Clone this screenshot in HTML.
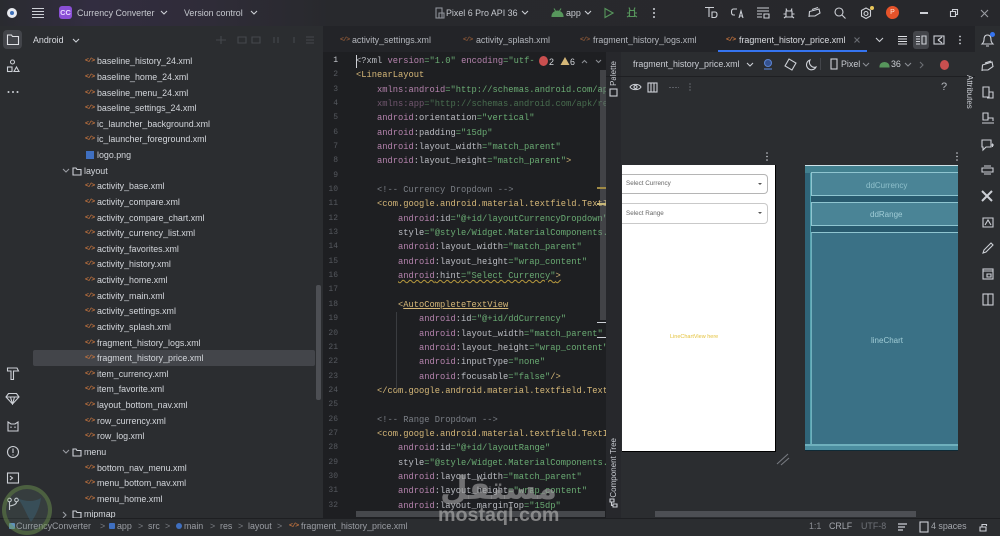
<!DOCTYPE html>
<html><head><meta charset="utf-8"><style>
html,body{margin:0;padding:0;background:#2b2d30}
#r{position:relative;width:1000px;height:536px;overflow:hidden;background:#2b2d30;font-family:"Liberation Sans",sans-serif;color:#c9ccd2;font-size:8.9px;filter:blur(.3px)}
#r div,#r span.a,#r svg{position:absolute}
.t{position:absolute;white-space:nowrap;line-height:12px}
svg{fill:none;stroke:#cdd0d6;stroke-width:1.1}
.f{position:absolute;left:97px;white-space:nowrap;line-height:12px;color:#d3d6db;font-size:8.9px}
.fo{position:absolute;left:84px;white-space:nowrap;line-height:12px;color:#d3d6db;font-size:8.9px}
.x{position:absolute;left:85px;font:bold 6.5px/12px "Liberation Mono",monospace;color:#c9763f;letter-spacing:-.8px}
.c{position:absolute;white-space:pre;font:8.75px/14px "Liberation Mono",monospace;color:#bcbec4}
.n{position:absolute;left:324px;width:14px;text-align:right;font:8px/14px "Liberation Mono",monospace;color:#55585e}
.g{color:#6aab73}.p{color:#b583ad}.m{color:#7a7e85}.k{color:#d5b778}.d{color:#606368}.ln{color:#c9ccd2}
</style></head><body><div id="r">

<!-- title bar -->
<div style="left:0;top:0;width:1000px;height:26px;background:linear-gradient(90deg,#2a2b30 0,#322d40 90px,#2f2c38 210px,#28292d 330px,#27282c 100%)"></div>
<div style="left:7px;top:8px;width:10px;height:10px;border-radius:50%;background:#e8eaf0"></div>
<div style="left:10px;top:11px;width:4px;height:4px;background:#3d6fb8;border-radius:50%"></div>
<svg style="left:31px;top:7px" width="14" height="12"><path d="M1 1.500H13M1 4.500H13M1 7.500H13M1 10.500H13"/></svg>
<div style="left:59px;top:6px;width:13px;height:13px;border-radius:3px;background:#8a4fd6;color:#e8d8ff;font:bold 7.5px/13px 'Liberation Sans',sans-serif;text-align:center">CC</div>
<span class="t" style="left:77px;top:7px;color:#c6c9cf">Currency Converter</span>
<svg style="left:160px;top:10px" width="8" height="6"><path d="M1 1L4 4L7 1"/></svg>
<span class="t" style="left:184px;top:7px;color:#c6c9cf">Version control</span>
<svg style="left:250px;top:10px" width="8" height="6"><path d="M1 1L4 4L7 1"/></svg>

<svg style="left:434px;top:7px" width="11" height="12" stroke-width="1"><rect x="2" y="1" width="6" height="10" stroke="#8f939a"/><path d="M5 6h5v5H5z" stroke="#8f939a"/></svg>
<span class="t" style="left:446px;top:7px;color:#c6c9cf">Pixel 6 Pro API 36</span>
<svg style="left:521px;top:10px" width="8" height="6"><path d="M1 1L4 4L7 1"/></svg>
<svg style="left:551px;top:7px" width="13" height="11"><path d="M1 9.500C1 6 4 4 6.500 4S12 6 12 9.500Z" fill="#57965c" stroke="#57965c"/><path d="M3 1.500L4.500 4M10 1.500L8.500 4" stroke="#57965c"/></svg>
<span class="t" style="left:566px;top:7px;color:#c6c9cf">app</span>
<svg style="left:584px;top:10px" width="8" height="6"><path d="M1 1L4 4L7 1"/></svg>
<svg style="left:603px;top:7px" width="11" height="12"><path d="M2 1.500L10 6L2 10.500Z" stroke="#57965c"/></svg>
<svg style="left:626px;top:6px" width="12" height="13"><path d="M3.500 4.500H8.500V10.500H3.500ZM1 7H3.500M8.500 7H11M4 4L3 1.500M8 4L9 1.500M1 11L3.500 9.500M11 11L8.500 9.500" stroke="#57965c"/></svg>
<svg style="left:651px;top:7px" width="6" height="12"><circle cx="3" cy="2" r="1" fill="#cdd0d6" stroke="none"/><circle cx="3" cy="6" r="1" fill="#cdd0d6" stroke="none"/><circle cx="3" cy="10" r="1" fill="#cdd0d6" stroke="none"/></svg>

<svg style="left:704px;top:6px" width="14" height="14"><path d="M1 1.500H10M5 1.500V11M8 6H11Q13 6 13 8.500T11 11.500H8Z"/></svg>
<svg style="left:730px;top:6px" width="14" height="14"><path d="M7 3H3.500Q1.500 3 1.500 6T3.500 9H5M9 12L11 5L13 12M9.800 10H12.200"/></svg>
<svg style="left:756px;top:6px" width="14" height="14"><path d="M1 2H13M1 5H13M1 8H6M1 11H6M8 8H13V12H8Z"/></svg>
<svg style="left:782px;top:6px" width="14" height="14"><path d="M4 5H10V11H4ZM1.500 8H4M10 8H12.500M5 5L4 2.500M9 5L10 2.500M2 12L4 10.500M12 12L10 10.500"/></svg>
<svg style="left:807px;top:6px" width="15" height="14"><path d="M2 11L2.500 5.500L12 3L13 7L8 10H2M5 3.500L11 1.500"/></svg>
<svg style="left:833px;top:6px" width="14" height="14"><circle cx="6" cy="6" r="4"/><path d="M9 9L12.500 12.500"/></svg>
<svg style="left:859px;top:6px" width="14" height="14"><circle cx="7" cy="7.500" r="2"/><path d="M7 2L11.500 4.500V10L7 12.500L2.500 10V4.500Z"/></svg>
<div style="left:870px;top:6px;width:4px;height:4px;border-radius:50%;background:#e8c65a"></div>
<div style="left:886px;top:6px;width:13px;height:13px;border-radius:50%;background:#e5532a;color:#ffe3d6;font:7px/13px 'Liberation Sans',sans-serif;text-align:center">P</div>
<div style="left:920px;top:12px;width:8px;height:1.500px;background:#cdd0d6"></div>
<svg style="left:949px;top:8px" width="10" height="10"><path d="M1.500 3.500H6.500V8.500H1.500ZM3.500 3.500V1.500H8.500V6.500H6.500"/></svg>
<svg style="left:980px;top:9px" width="9" height="9"><path d="M1 1L8 8M8 1L1 8" stroke="#9a9da3"/></svg>

<!-- left stripe icons -->
<div style="left:3px;top:30px;width:19px;height:19px;border-radius:4px;background:#43454a"></div>
<svg style="left:6px;top:33px" width="14" height="13"><path d="M1.500 2H5.500L6.500 3.500H12.500V11.500H1.500Z" stroke="#e0e2e6"/></svg>
<svg style="left:6px;top:59px" width="14" height="14"><circle cx="6.500" cy="3" r="2"/><rect x="1.500" y="8" width="4.500" height="4.500"/><path d="M10.500 8L13 12.500H8Z"/></svg>
<svg style="left:6px;top:88px" width="14" height="8"><circle cx="2.500" cy="4" r="1" fill="#cdd0d6" stroke="none"/><circle cx="7" cy="4" r="1" fill="#cdd0d6" stroke="none"/><circle cx="11.500" cy="4" r="1" fill="#cdd0d6" stroke="none"/></svg>
<svg style="left:6px;top:366px" width="14" height="15"><path d="M1.500 2H11L12.500 5H7.500V13.500H5V5H1.500Z"/></svg>
<svg style="left:5px;top:392px" width="15" height="13"><path d="M3.500 1.500H11.500L14 5L7.500 12L1 5ZM1 5H14M5.500 5L7.500 12L9.500 5"/></svg>
<svg style="left:6px;top:419px" width="14" height="14"><path d="M2 3L5 5H9L12 3V12H2ZM5 7.500V9M9 7.500V9"/></svg>
<svg style="left:6px;top:445px" width="14" height="14"><circle cx="7" cy="7" r="5.500"/><path d="M7 3.500V8M7 9.500V10.500"/></svg>
<svg style="left:6px;top:471px" width="14" height="14"><rect x="1.500" y="2" width="11" height="10"/><path d="M4 5L6.500 7L4 9"/></svg>
<svg style="left:6px;top:497px" width="14" height="14"><circle cx="3.500" cy="3" r="1.800"/><circle cx="10.500" cy="3" r="1.800"/><path d="M3.500 5V13M10.500 5Q10.500 8 3.500 9"/></svg>

<!-- project header -->
<span class="t" style="left:33px;top:34px;color:#d9dbe0">Android</span>
<svg style="left:72px;top:38px" width="8" height="6"><path d="M1 1L4 4L7 1"/></svg>
<svg style="left:214px;top:34px" width="100" height="12"><g stroke="#45484d"><path d="M2 6H12M7 2V10M24 3H32V9H24ZM38 3H46V9H38ZM60 3V9M64 3V9M80 3V9M92 3H102M92 6H102M92 9H102"/></g></svg>

<!-- tree -->
<div style="left:33px;top:350px;width:282px;height:16px;background:#43454a;border-radius:2px"></div>
<div style="left:316px;top:285px;width:5px;height:115px;background:#4d4f54;border-radius:2px"></div>

<span class="x" style="top:55px">&lt;/&gt;</span><span class="f" style="top:55px">baseline_history_24.xml</span>
<span class="x" style="top:71px">&lt;/&gt;</span><span class="f" style="top:71px">baseline_home_24.xml</span>
<span class="x" style="top:87px">&lt;/&gt;</span><span class="f" style="top:87px">baseline_menu_24.xml</span>
<span class="x" style="top:102px">&lt;/&gt;</span><span class="f" style="top:102px">baseline_settings_24.xml</span>
<span class="x" style="top:118px">&lt;/&gt;</span><span class="f" style="top:118px">ic_launcher_background.xml</span>
<span class="x" style="top:133px">&lt;/&gt;</span><span class="f" style="top:133px">ic_launcher_foreground.xml</span>
<div style="left:86px;top:151px;width:8px;height:8px;background:#3f6fc0"></div><span class="f" style="top:149px">logo.png</span>
<svg style="left:62px;top:168px" width="8" height="6"><path d="M1 1L4 4L7 1" stroke="#9a9da3"/></svg>
<svg style="left:72px;top:166px" width="10" height="10"><path d="M1 2H4L5 3.500H9V9H1Z"/></svg>
<span class="fo" style="top:165px">layout</span>
<span class="x" style="top:180px">&lt;/&gt;</span><span class="f" style="top:180px">activity_base.xml</span>
<span class="x" style="top:196px">&lt;/&gt;</span><span class="f" style="top:196px">activity_compare.xml</span>
<span class="x" style="top:212px">&lt;/&gt;</span><span class="f" style="top:212px">activity_compare_chart.xml</span>
<span class="x" style="top:227px">&lt;/&gt;</span><span class="f" style="top:227px">activity_currency_list.xml</span>
<span class="x" style="top:243px">&lt;/&gt;</span><span class="f" style="top:243px">activity_favorites.xml</span>
<span class="x" style="top:258px">&lt;/&gt;</span><span class="f" style="top:258px">activity_history.xml</span>
<span class="x" style="top:274px">&lt;/&gt;</span><span class="f" style="top:274px">activity_home.xml</span>
<span class="x" style="top:290px">&lt;/&gt;</span><span class="f" style="top:290px">activity_main.xml</span>
<span class="x" style="top:305px">&lt;/&gt;</span><span class="f" style="top:305px">activity_settings.xml</span>
<span class="x" style="top:321px">&lt;/&gt;</span><span class="f" style="top:321px">activity_splash.xml</span>
<span class="x" style="top:337px">&lt;/&gt;</span><span class="f" style="top:337px">fragment_history_logs.xml</span>
<span class="x" style="top:352px">&lt;/&gt;</span><span class="f" style="top:352px">fragment_history_price.xml</span>
<span class="x" style="top:368px">&lt;/&gt;</span><span class="f" style="top:368px">item_currency.xml</span>
<span class="x" style="top:383px">&lt;/&gt;</span><span class="f" style="top:383px">item_favorite.xml</span>
<span class="x" style="top:399px">&lt;/&gt;</span><span class="f" style="top:399px">layout_bottom_nav.xml</span>
<span class="x" style="top:415px">&lt;/&gt;</span><span class="f" style="top:415px">row_currency.xml</span>
<span class="x" style="top:430px">&lt;/&gt;</span><span class="f" style="top:430px">row_log.xml</span>
<svg style="left:62px;top:449px" width="8" height="6"><path d="M1 1L4 4L7 1" stroke="#9a9da3"/></svg>
<svg style="left:72px;top:447px" width="10" height="10"><path d="M1 2H4L5 3.500H9V9H1Z"/></svg>
<span class="fo" style="top:446px">menu</span>
<span class="x" style="top:462px">&lt;/&gt;</span><span class="f" style="top:462px">bottom_nav_menu.xml</span>
<span class="x" style="top:477px">&lt;/&gt;</span><span class="f" style="top:477px">menu_bottom_nav.xml</span>
<span class="x" style="top:493px">&lt;/&gt;</span><span class="f" style="top:493px">menu_home.xml</span>
<svg style="left:62px;top:511px" width="6" height="8"><path d="M1 1L4 4L1 7" stroke="#9a9da3"/></svg>
<svg style="left:72px;top:509px" width="10" height="10"><path d="M1 2H4L5 3.500H9V9H1Z"/></svg>
<span class="fo" style="top:508px">mipmap</span>

<!-- editor -->
<div style="left:323px;top:26px;width:652px;height:26px;background:#232428"></div>
<div style="left:323px;top:52px;width:283px;height:466px;background:#1e1f22"></div>

<span class="x" style="left:340px;top:34px;opacity:.65">&lt;/&gt;</span><span class="t" style="left:352px;top:34px;color:#b4b7bd">activity_settings.xml</span>
<span class="x" style="left:463px;top:34px;opacity:.65">&lt;/&gt;</span><span class="t" style="left:476px;top:34px;color:#b4b7bd">activity_splash.xml</span>
<span class="x" style="left:580px;top:34px;opacity:.65">&lt;/&gt;</span><span class="t" style="left:593px;top:34px;color:#b4b7bd">fragment_history_logs.xml</span>
<span class="x" style="left:726px;top:34px">&lt;/&gt;</span><span class="t" style="left:739px;top:34px;color:#d9dbe0">fragment_history_price.xml</span>
<svg style="left:853px;top:36px" width="8" height="8"><path d="M1.500 1.500L6.500 6.500M6.500 1.500L1.500 6.500" stroke="#6b6e74"/></svg>
<div style="left:718px;top:50px;width:149px;height:3px;background:#3574f0"></div>
<svg style="left:875px;top:37px" width="9" height="6"><path d="M1 1L4.500 4.500L8 1"/></svg>
<svg style="left:897px;top:35px" width="11" height="10"><path d="M1 1.500H10M1 4H10M1 6.500H10M1 9H10" stroke="#e0e2e6"/></svg>
<div style="left:913px;top:31px;width:16px;height:18px;background:#43454a;border-radius:3px"></div>
<svg style="left:915px;top:35px" width="12" height="10"><path d="M1 1.500H5M1 4H5M1 6.500H5M1 9H5M7 1H11V9H7Z"/></svg>
<svg style="left:933px;top:35px" width="12" height="10"><rect x="1" y="1" width="10" height="8"/><path d="M5 5L9 2M5 5L9 8"/></svg>
<svg style="left:957px;top:35px" width="6" height="10"><circle cx="3" cy="1.500" r=".9" fill="#cdd0d6" stroke="none"/><circle cx="3" cy="5" r=".9" fill="#cdd0d6" stroke="none"/><circle cx="3" cy="8.500" r=".9" fill="#cdd0d6" stroke="none"/></svg>

<div style="left:323px;top:53px;width:283px;height:461px;overflow:hidden;background:transparent">
<span class="c" style="left:33px;top:1px;color:#bcbec4">&lt;?xml <span class="p">version</span><span class="g">="1.0"</span> <span class="p">encoding</span><span class="g">="utf-</span></span>
<span class="c" style="left:33px;top:15px;color:#d5b778">&lt;LinearLayout</span>
<span class="c" style="left:54px;top:30px"><span class="p">xmlns:android</span><span class="g">="http://schemas.android.com/ap</span></span>
<span class="c" style="left:54px;top:44px;opacity:.55"><span class="p">xmlns:app</span><span class="g">="http://schemas.android.com/apk/re</span></span>
<span class="c" style="left:54px;top:58px"><span class="p">android</span>:orientation<span class="g">="vertical"</span></span>
<span class="c" style="left:54px;top:73px"><span class="p">android</span>:padding<span class="g">="15dp"</span></span>
<span class="c" style="left:54px;top:87px"><span class="p">android</span>:layout_width<span class="g">="match_parent"</span></span>
<span class="c" style="left:54px;top:101px"><span class="p">android</span>:layout_height<span class="g">="match_parent"</span><span class="k">&gt;</span></span>
<span class="c m" style="left:54px;top:130px">&lt;!-- Currency Dropdown --&gt;</span>
<span class="c k" style="left:54px;top:144px">&lt;com.google.android.material.textfield.TextI</span>
<span class="c" style="left:75px;top:159px"><span class="p">android</span>:id<span class="g">="@+id/layoutCurrencyDropdown"</span></span>
<span class="c" style="left:75px;top:173px">style<span class="g">="@style/Widget.MaterialComponents.</span></span>
<span class="c" style="left:75px;top:187px"><span class="p">android</span>:layout_width<span class="g">="match_parent"</span></span>
<span class="c" style="left:75px;top:202px"><span class="p">android</span>:layout_height<span class="g">="wrap_content"</span></span>
<span class="c" style="left:75px;top:216px;text-decoration:underline wavy #b89a3e 1px"><span class="p">android</span>:hint<span class="g">="Select Currency"</span><span class="k">&gt;</span></span>
<span class="c k" style="left:75px;top:245px">&lt;<u>AutoCompleteTextView</u></span>
<span class="c" style="left:96px;top:259px"><span class="p">android</span>:id<span class="g">="@+id/ddCurrency"</span></span>
<span class="c" style="left:96px;top:274px"><span class="p">android</span>:layout_width<span class="g">="match_parent"</span></span>
<span class="c" style="left:96px;top:288px"><span class="p">android</span>:layout_height<span class="g">="wrap_content"</span></span>
<span class="c" style="left:96px;top:302px"><span class="p">android</span>:inputType<span class="g">="none"</span></span>
<span class="c" style="left:96px;top:317px"><span class="p">android</span>:focusable<span class="g">="false"</span><span class="k">/&gt;</span></span>
<span class="c k" style="left:54px;top:331px">&lt;/com.google.android.material.textfield.Text</span>
<span class="c m" style="left:54px;top:360px">&lt;!-- Range Dropdown --&gt;</span>
<span class="c k" style="left:54px;top:374px">&lt;com.google.android.material.textfield.TextI</span>
<span class="c" style="left:75px;top:388px"><span class="p">android</span>:id<span class="g">="@+id/layoutRange"</span></span>
<span class="c" style="left:75px;top:403px">style<span class="g">="@style/Widget.MaterialComponents.</span></span>
<span class="c" style="left:75px;top:417px"><span class="p">android</span>:layout_width<span class="g">="match_parent"</span></span>
<span class="c" style="left:75px;top:431px"><span class="p">android</span>:layout_height<span class="g">="wrap_content"</span></span>
<span class="c" style="left:75px;top:446px"><span class="p">android</span>:layout_marginTop<span class="g">="15dp"</span></span>
</div>

<span class="n ln" style="top:54px">1</span><span class="n" style="top:68px">2</span><span class="n" style="top:83px">3</span><span class="n" style="top:97px">4</span><span class="n" style="top:111px">5</span><span class="n" style="top:126px">6</span><span class="n" style="top:140px">7</span><span class="n" style="top:154px">8</span><span class="n" style="top:169px">9</span><span class="n" style="top:183px">10</span><span class="n" style="top:197px">11</span><span class="n" style="top:212px">12</span><span class="n" style="top:226px">13</span><span class="n" style="top:240px">14</span><span class="n" style="top:255px">15</span><span class="n" style="top:269px">16</span><span class="n" style="top:283px">17</span><span class="n" style="top:298px">18</span><span class="n" style="top:312px">19</span><span class="n" style="top:327px">20</span><span class="n" style="top:341px">21</span><span class="n" style="top:355px">22</span><span class="n" style="top:370px">23</span><span class="n" style="top:384px">24</span><span class="n" style="top:398px">25</span><span class="n" style="top:413px">26</span><span class="n" style="top:427px">27</span><span class="n" style="top:441px">28</span><span class="n" style="top:456px">29</span><span class="n" style="top:470px">30</span><span class="n" style="top:484px">31</span><span class="n" style="top:499px">32</span>

<div style="left:356px;top:55px;width:1px;height:13px;background:#ced0d6"></div>
<div style="left:396px;top:312px;width:1px;height:78px;background:#3a3c40"></div>

<!-- error widget -->
<div style="left:537px;top:53px;width:68px;height:15px;background:#1e1f22"></div>
<div style="left:539px;top:56px;width:9px;height:10px;border-radius:50%;background:#c94f4f"></div>
<span class="t" style="left:549px;top:56px;color:#d3d6db">2</span>
<svg style="left:560px;top:56px" width="10" height="10"><path d="M5 1L9.500 9H.5Z" fill="#d5b778" stroke="none"/></svg>
<span class="t" style="left:570px;top:56px;color:#d3d6db">6</span>
<svg style="left:581px;top:59px" width="7" height="5"><path d="M1 4L3.500 1.500L6 4" stroke="#8a8d93"/></svg>
<svg style="left:595px;top:59px" width="7" height="5"><path d="M1 1L3.500 3.500L6 1" stroke="#8a8d93"/></svg>

<!-- editor scrollbar + marks -->
<div style="left:600px;top:70px;width:6px;height:250px;background:rgba(120,122,128,.4)"></div>
<div style="left:597px;top:187px;width:9px;height:2px;background:#a08a45"></div>
<div style="left:597px;top:203px;width:9px;height:2px;background:#c8b878"></div>
<div style="left:597px;top:322px;width:9px;height:1px;background:#cdd0d6"></div>
<div style="left:597px;top:337px;width:9px;height:1px;background:#cdd0d6"></div>
<div style="left:356px;top:511px;width:249px;height:6px;background:#46484c"></div>

<!-- design pane -->
<div style="left:606px;top:52px;width:369px;height:466px;background:#2b2d30"></div>
<div style="left:606px;top:52px;width:15px;height:466px;background:#27282c"></div>
<span class="t" style="left:608px;top:61px;writing-mode:vertical-rl;transform:rotate(180deg);color:#c9ccd2;font-size:8px">Palette</span>
<svg style="left:609px;top:88px" width="9" height="9"><rect x="1" y="1" width="7" height="7"/></svg>
<span class="t" style="left:608px;top:438px;writing-mode:vertical-rl;transform:rotate(180deg);color:#c9ccd2;font-size:8px">Component Tree</span>
<svg style="left:609px;top:498px" width="9" height="10"><path d="M1 1H5V4H1ZM4 6H8V9H4ZM2.500 4V7.500H4"/></svg>

<span class="t" style="left:633px;top:58px;color:#c9ccd2">fragment_history_price.xml</span>
<svg style="left:746px;top:62px" width="8" height="6"><path d="M1 1L4 4L7 1"/></svg>
<svg style="left:762px;top:58px" width="13" height="13"><circle cx="6" cy="5" r="3.500" fill="#34518f" stroke="#5b82cf"/><path d="M2 11H10" stroke="#5b82cf"/></svg>
<svg style="left:784px;top:58px" width="13" height="13"><rect x="2.500" y="2.500" width="8" height="8" transform="rotate(30 6.500 6.500)"/></svg>
<svg style="left:805px;top:58px" width="13" height="13"><path d="M5 2A5 5 0 1 0 11 9A5 5 0 0 1 5 2Z"/></svg>
<div style="left:820px;top:58px;width:1px;height:12px;background:#43454a"></div>
<svg style="left:830px;top:58px" width="8" height="12"><rect x="1" y="1" width="6" height="10"/></svg>
<span class="t" style="left:841px;top:58px;color:#c9ccd2">Pixel</span>
<svg style="left:862px;top:62px" width="8" height="6"><path d="M1 1L4 4L7 1" stroke="#8a8d93"/></svg>
<svg style="left:879px;top:60px" width="11" height="9"><path d="M1 7C1 4 3 2.500 5.500 2.500S10 4 10 7Z" fill="#57965c" stroke="#57965c"/></svg>
<span class="t" style="left:891px;top:58px;color:#c9ccd2">36</span>
<svg style="left:904px;top:62px" width="8" height="6"><path d="M1 1L4 4L7 1" stroke="#8a8d93"/></svg>
<svg style="left:919px;top:61px" width="6" height="8"><path d="M1 1L4 4L1 7" stroke="#6b6e74"/></svg>
<div style="left:940px;top:60px;width:9px;height:10px;border-radius:50%;background:#c94f4f"></div>
<div style="left:606px;top:76px;width:369px;height:1px;background:#1e1f22"></div>

<svg style="left:629px;top:81px" width="13" height="13"><path d="M1 6C3 2.500 10 2.500 12 6C10 9.500 3 9.500 1 6Z"/><circle cx="6.500" cy="6" r="1.500"/></svg>
<svg style="left:647px;top:82px" width="11" height="11"><rect x="1" y="1" width="9" height="9"/><path d="M4 1V10M7 1V10"/></svg>
<svg style="left:668px;top:85px" width="12" height="5"><path d="M1 2.500H11" stroke="#5b5e64" stroke-dasharray="2 1"/></svg>
<svg style="left:687px;top:82px" width="6" height="11"><path d="M3 1V10" stroke="#5b5e64" stroke-dasharray="2 1"/></svg>
<span class="t" style="left:941px;top:81px;color:#b4b7bd;font-size:11px">?</span>
<span class="t" style="left:963px;top:75px;writing-mode:vertical-rl;color:#c9ccd2;font-size:8px">Attributes</span>

<svg style="left:764px;top:151px" width="6" height="11"><circle cx="3" cy="2" r=".8" fill="#cdd0d6" stroke="none"/><circle cx="3" cy="5.500" r=".8" fill="#cdd0d6" stroke="none"/><circle cx="3" cy="9" r=".8" fill="#cdd0d6" stroke="none"/></svg>
<svg style="left:954px;top:151px" width="6" height="11"><circle cx="3" cy="2" r=".8" fill="#cdd0d6" stroke="none"/><circle cx="3" cy="5.500" r=".8" fill="#cdd0d6" stroke="none"/><circle cx="3" cy="9" r=".8" fill="#cdd0d6" stroke="none"/></svg>

<!-- phone preview -->
<div style="left:622px;top:165px;width:153.500px;height:286.500px;background:#fff;border-right:1.500px solid #000;border-bottom:1.500px solid #000;box-sizing:border-box"></div>
<div style="left:622px;top:174px;width:146px;height:20px;border:1px solid #b5b5b5;border-left:0;border-radius:0 4px 4px 0;box-sizing:border-box"></div>
<div style="left:622px;top:203px;width:146px;height:21px;border:1px solid #c9c9c9;border-left:0;border-radius:0 4px 4px 0;box-sizing:border-box"></div>
<span class="t" style="left:626px;top:178px;color:#666;font-size:6.300px">Select Currency</span>
<span class="t" style="left:626px;top:208px;color:#666;font-size:6.300px">Select Range</span>
<div style="left:758px;top:183px;border:2px solid transparent;border-top:2.500px solid #555"></div>
<div style="left:758px;top:212px;border:2px solid transparent;border-top:2.500px solid #555"></div>
<span class="t" style="left:670px;top:331px;color:#e4c23c;font-size:5.500px">LineChartView here</span>
<svg style="left:776px;top:452px" width="14" height="14"><path d="M1 12L12 2M5 13L13 6" stroke="#777a80"/></svg>

<!-- blueprint -->
<div style="left:805px;top:165px;width:153px;height:286px;background:#3a7186;border-top:1px solid #cfe2e8;border-bottom:1px solid #0f2a36;box-sizing:border-box"></div>
<div style="left:805px;top:166px;width:5px;height:284px;background:#2f6478"></div>
<div style="left:810px;top:166px;width:2px;height:284px;background:#56a3b0"></div>
<div style="left:805px;top:166px;width:153px;height:7px;background:#42808f"></div>
<div style="left:805px;top:444px;width:153px;height:2px;background:#6fb0bd"></div>
<div style="left:805px;top:446px;width:153px;height:4px;background:#4c8ea0"></div>
<div style="left:811px;top:172px;width:147px;height:24px;background:#4a8496;border-top:1px solid #8fc5d0;border-left:1px solid #8fc5d0;border-bottom:1px solid #8fc5d0;box-sizing:border-box"></div>
<div style="left:811px;top:196px;width:147px;height:6px;background:#285a6e"></div>
<div style="left:811px;top:202px;width:147px;height:24px;background:#4a8496;border-top:1px solid #8fc5d0;border-left:1px solid #8fc5d0;border-bottom:1px solid #8fc5d0;box-sizing:border-box"></div>
<div style="left:811px;top:226px;width:147px;height:6px;background:#285a6e"></div>
<div style="left:811px;top:232px;width:147px;height:212px;background:#3a7186;border-top:1px solid #8fc5d0;border-left:1px solid #6fb0bd;box-sizing:border-box"></div>
<span class="t" style="left:866px;top:180px;color:#8fc0cc;font-size:8px">ddCurrency</span>
<span class="t" style="left:870px;top:209px;color:#a0ccd6;font-size:8px">ddRange</span>
<span class="t" style="left:871px;top:335px;color:#a0ccd6;font-size:8px">lineChart</span>

<div style="left:655px;top:511px;width:261px;height:6px;background:#4d4f54"></div>

<!-- right stripe -->
<div style="left:975px;top:26px;width:25px;height:492px;background:#2b2d30"></div>
<svg style="left:980px;top:33px" width="15" height="15"><path d="M7.500 2C4.500 2 4 4.500 4 7C4 9 3 10 2 11H13C12 10 11 9 11 7C11 4.500 10.500 2 7.500 2ZM6 13H9"/></svg>
<div style="left:990px;top:32px;width:5px;height:5px;border-radius:50%;background:#3574f0"></div>
<svg style="left:980px;top:59px" width="15" height="15"><path d="M2 12L2.500 6L12 3L13 7.500L8 11H2M5 4L11 2"/></svg>
<svg style="left:981px;top:85px" width="14" height="15"><path d="M2 2H8V12H2ZM8 7H12V13H6"/></svg>
<svg style="left:981px;top:111px" width="14" height="15"><path d="M2 2H7V9H2ZM1 12H13M7 7H12V10"/></svg>
<svg style="left:980px;top:137px" width="15" height="15"><path d="M2 3H11V10H6L3 13V10H2ZM11 8H14M12.500 6.500V10"/></svg>
<svg style="left:980px;top:163px" width="15" height="14"><path d="M2 5H13V9H2ZM4 3H11M4 11H11"/></svg>
<svg style="left:980px;top:189px" width="15" height="14"><path d="M2 2L12 12M12 2L2 12" stroke-width="2"/></svg>
<svg style="left:981px;top:215px" width="14" height="14"><path d="M2 3H12V12H2ZM4 10L7 5L10 10"/></svg>
<svg style="left:981px;top:241px" width="14" height="14"><path d="M2 12L3 9L10 2L12 4L5 11Z"/></svg>
<svg style="left:981px;top:267px" width="14" height="14"><rect x="2" y="2" width="10" height="10"/><path d="M2 4H12M6 7H10V10H6Z"/></svg>
<svg style="left:981px;top:292px" width="14" height="15"><rect x="2" y="2" width="10" height="11"/><path d="M7 2V13"/></svg>

<!-- status bar -->
<div style="left:0;top:518px;width:1000px;height:18px;background:#2b2d30;border-top:1px solid #1e1f22;box-sizing:border-box"></div>
<div style="left:9px;top:523px;width:6px;height:6px;background:#5a8fc0;border-radius:1px"></div>
<span class="t" style="left:16px;top:520px;color:#9a9da3">CurrencyConverter</span>
<span class="t" style="left:100px;top:520px;color:#7a7d83">&gt;</span>
<div style="left:109px;top:523px;width:6px;height:6px;background:#3f6fc0;border-radius:1px"></div>
<span class="t" style="left:117px;top:520px;color:#9a9da3">app</span>
<span class="t" style="left:138px;top:520px;color:#7a7d83">&gt;</span>
<span class="t" style="left:148px;top:520px;color:#9a9da3">src</span>
<span class="t" style="left:165px;top:520px;color:#7a7d83">&gt;</span>
<div style="left:176px;top:523px;width:6px;height:6px;background:#3f6fc0;border-radius:50%"></div>
<span class="t" style="left:184px;top:520px;color:#9a9da3">main</span>
<span class="t" style="left:210px;top:520px;color:#7a7d83">&gt;</span>
<span class="t" style="left:220px;top:520px;color:#9a9da3">res</span>
<span class="t" style="left:238px;top:520px;color:#7a7d83">&gt;</span>
<span class="t" style="left:248px;top:520px;color:#9a9da3">layout</span>
<span class="t" style="left:277px;top:520px;color:#7a7d83">&gt;</span>
<span class="x" style="left:289px;top:520px">&lt;/&gt;</span>
<span class="t" style="left:301px;top:520px;color:#9a9da3">fragment_history_price.xml</span>
<span class="t" style="left:809px;top:520px;color:#8a8d93">1:1</span>
<span class="t" style="left:829px;top:520px;color:#a5a8ae">CRLF</span>
<span class="t" style="left:861px;top:520px;color:#6f7278">UTF-8</span>
<svg style="left:897px;top:522px" width="11" height="10"><path d="M1 2H10M1 5H8M1 8H6" stroke-width="1.300"/></svg>
<svg style="left:919px;top:521px" width="10" height="12"><rect x="1" y="1" width="8" height="10"/></svg>
<span class="t" style="left:931px;top:520px;color:#a5a8ae">4 spaces</span>
<svg style="left:979px;top:522px" width="11" height="10"><path d="M1 5H7V9H1ZM3 5V2.500H7.500V4"/></svg>

<!-- watermark -->
<div style="left:2px;top:485px;width:50px;height:50px;border-radius:50%;border:4px solid rgba(110,150,70,.4);background:rgba(130,160,150,.14);box-sizing:border-box"></div>
<svg style="left:14px;top:494px" width="30" height="32"><path d="M3 4C8 8 12 20 17 28C22 22 26 12 27 4C20 8 12 8 3 4Z" fill="rgba(60,100,120,.45)" stroke="none"/></svg>
<span class="t" style="left:438px;top:504px;font:bold 19.700px/22px 'Liberation Sans',sans-serif;color:rgba(165,165,165,.72)">mostaql.com</span>
<span class="t" style="left:440px;top:468px;font:bold 32px/40px 'Liberation Sans','DejaVu Sans',sans-serif;color:rgba(165,165,165,.62)">مستقل</span>

</div></body></html>
